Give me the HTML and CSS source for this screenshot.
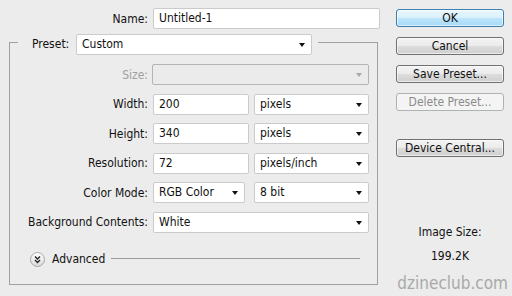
FILE: index.html
```html
<!DOCTYPE html>
<html>
<head>
<meta charset="utf-8">
<link rel="stylesheet" href="styles.css">
</head>
<body>
<div class="dialog">
  <div class="main">
    <div class="name-row">
      <span class="lbl">Name:</span>
      <div class="field">Untitled-1</div>
    </div>
    <fieldset class="preset">
      <legend class="legend">
        <span class="legend-lbl">Preset:</span>
        <div class="select preset-select"><span>Custom</span><i class="arrow"></i></div>
      </legend>
      <div class="grid">
        <span class="lbl disabled">Size:</span>
        <div class="select span3 disabled-select"><span></span><i class="arrow grey"></i></div>

        <span class="lbl">Width:</span>
        <div class="field">200</div>
        <div class="select"><span>pixels</span><i class="arrow"></i></div>

        <span class="lbl">Height:</span>
        <div class="field">340</div>
        <div class="select"><span>pixels</span><i class="arrow"></i></div>

        <span class="lbl">Resolution:</span>
        <div class="field">72</div>
        <div class="select"><span>pixels/inch</span><i class="arrow"></i></div>

        <span class="lbl">Color Mode:</span>
        <div class="select narrow"><span>RGB Color</span><i class="arrow"></i></div>
        <div class="select"><span>8 bit</span><i class="arrow"></i></div>

        <span class="lbl">Background Contents:</span>
        <div class="select span3"><span>White</span><i class="arrow"></i></div>
      </div>
      <div class="advanced">
        <span class="adv-icon">
          <svg width="15" height="15" viewBox="0 0 15 15">
            <defs>
              <linearGradient id="g" x1="0" y1="0" x2="0" y2="1">
                <stop offset="0" stop-color="#ffffff"/>
                <stop offset="1" stop-color="#d8d8d8"/>
              </linearGradient>
            </defs>
            <circle cx="7.5" cy="7.5" r="7" fill="url(#g)" stroke="#a8a8a8"/>
            <path d="M5 4.5 L7.5 7 L10 4.5 M5 8 L7.5 10.5 L10 8" fill="none" stroke="#222" stroke-width="1.3"/>
          </svg>
        </span>
        <span class="adv-text">Advanced</span>
        <span class="adv-line"></span>
      </div>
    </fieldset>
  </div>
  <div class="side">
    <div class="btn ok">OK</div>
    <div class="btn">Cancel</div>
    <div class="btn">Save Preset...</div>
    <div class="btn off">Delete Preset...</div>
    <div class="btn device">Device Central...</div>
    <div class="info">
      <div class="info-lbl">Image Size:</div>
      <div class="info-val">199.2K</div>
    </div>
    <div class="mark">dzineclub.com</div>
  </div>
</div>
</body>
</html>
```

FILE: styles.css
```css
html, body {
  margin: 0;
  padding: 0;
  background: #ececec;
}
body {
  font-family: "DejaVu Sans Condensed", "DejaVu Sans", sans-serif;
  font-stretch: condensed;
  font-size: 12px;
  color: #111;
  width: 512px;
  height: 296px;
  overflow: hidden;
}
.dialog {
  display: grid;
  grid-template-columns: 396px 108px;
}
.main {
  padding-top: 8px;
}
.name-row {
  display: grid;
  grid-template-columns: 148px 227px;
  column-gap: 5px;
  align-items: center;
}
.lbl {
  text-align: right;
  white-space: nowrap;
}
.lbl.disabled {
  color: #a0a0a0;
}
.field, .select {
  box-sizing: border-box;
  height: 21px;
  background: #fff;
  border: 1px solid #cbcbcb;
  border-radius: 2px;
  line-height: 19px;
  padding-left: 5px;
  white-space: nowrap;
}
.select {
  display: flex;
  align-items: center;
  justify-content: space-between;
  padding-right: 6px;
}
.arrow {
  width: 0;
  height: 0;
  border-left: 3.5px solid transparent;
  border-right: 3.5px solid transparent;
  border-top: 4px solid #111;
  margin-top: 1px;
}
.arrow.grey {
  border-top-color: #a8a8a8;
}
.disabled-select {
  background: #ebebeb;
  border-color: #b4b4b4;
  margin-left: -1px;
}
.preset {
  box-sizing: border-box;
  width: 369px;
  margin: 5px 0 0 9px;
  padding: 13px 8px 17px 8px;
  border: 1px solid #a0a0a0;
  min-width: 0;
}
.legend {
  display: flex;
  align-items: flex-start;
  padding: 0 6px 0 14px;
}
.legend-lbl {
  width: 44px;
  line-height: 21px;
  margin-bottom: -4px;
}
.preset-select {
  width: 236px;
  margin-bottom: -4px;
}
.grid {
  display: grid;
  grid-template-columns: 130px 96px 115px;
  grid-auto-rows: 21px;
  column-gap: 5px;
  row-gap: 8.5px;
  align-items: center;
}
.span3 {
  grid-column: 2 / 4;
}
.narrow {
  width: 92px;
}
.advanced {
  display: flex;
  align-items: center;
  margin-top: 19px;
  padding-left: 12px;
  height: 15px;
}
.adv-icon {
  display: block;
  width: 15px;
  height: 15px;
}
.adv-icon svg {
  display: block;
}
.adv-text {
  margin-left: 7px;
  margin-right: 6px;
}
.adv-line {
  width: 249px;
  height: 1px;
  background: #9c9c9c;
  margin-top: -1px;
}
.side {
  padding-top: 9px;
  display: flex;
  flex-direction: column;
}
.btn {
  box-sizing: border-box;
  height: 18px;
  margin-bottom: 10px;
  border: 1px solid #707070;
  border-radius: 3px;
  background: linear-gradient(#f3f3f3 0%, #ebebeb 50%, #dddddd 50%, #cfcfcf 100%);
  text-align: center;
  line-height: 16px;
  color: #111;
  box-shadow: inset 0 0 0 1px rgba(255,255,255,0.6);
}
.btn.ok {
  border-color: #3c7fb1;
  background: linear-gradient(#eaf6fd 0%, #d9f0fc 50%, #bee6fd 50%, #a7d9f5 100%);
}
.btn.off {
  border-color: #adb2b5;
  background: #f4f4f4;
  color: #8a8a8a;
  box-shadow: none;
}
.btn.device {
  margin-top: 18px;
}
.info {
  margin-top: 58px;
  text-align: center;
}
.info-lbl {
  line-height: 14px;
}
.info-val {
  margin-top: 10px;
  line-height: 14px;
}
.mark {
  margin-top: 12px;
  margin-right: -4px;
  text-align: right;
  font-size: 17px;
  line-height: 17px;
  color: #a9a9a9;
}
```
